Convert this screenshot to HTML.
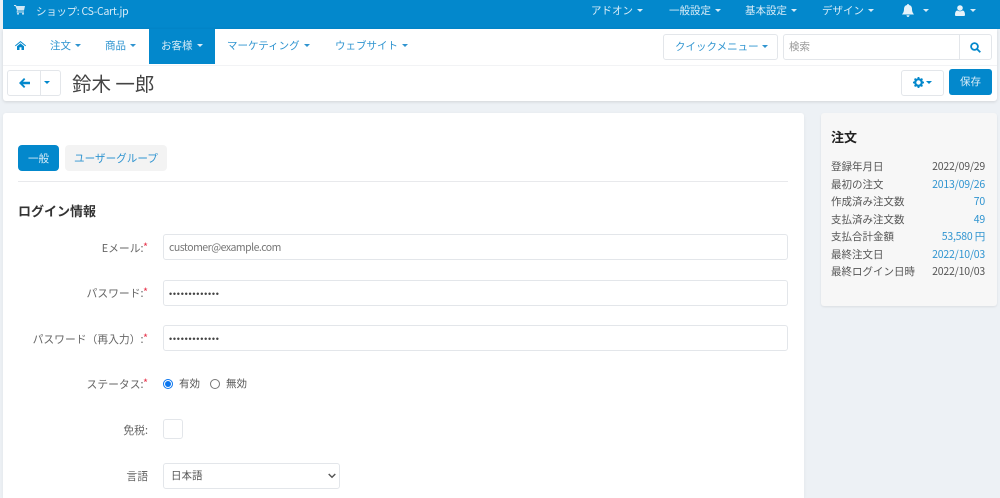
<!DOCTYPE html>
<html lang="ja"><head><meta charset="utf-8"><title>鈴木 一郎</title>
<style>
*{box-sizing:border-box}
html,body{margin:0;padding:0}
body{width:1000px;height:498px;overflow:hidden;position:relative;background:#edf1f5;font-family:"Noto Sans CJK JP","Liberation Sans",sans-serif;font-size:10.5px;color:#555}
.a{position:absolute;white-space:nowrap;line-height:14px}
.box{position:absolute;background:#fff;border:1px solid #e3e6ea;border-radius:3px}
.c{display:inline-block;width:0;height:0;border-left:3.500px solid transparent;border-right:3.500px solid transparent;border-top:3.500px solid currentColor;vertical-align:2px;margin-left:4px}
.w{color:#d9ecf7}
.b{color:#2f94d0}
.l{text-align:right;right:852px;color:#666;font-size:10.800px}
.l i{color:#e8384f;font-style:normal;position:relative;top:-1px}
.s1{left:831px;color:#555}
.s2{right:15px;color:#555;letter-spacing:-.2px}
svg{position:absolute;display:block}
</style></head><body>
<div style="position:absolute;left:3px;top:0;width:997px;height:29px;background:#0388cc"></div>
<div style="position:absolute;left:3px;top:29px;width:994px;height:72px;background:#fff;box-shadow:0 1px 3px rgba(0,0,0,.12);border-radius:0 0 3px 3px"></div>
<div style="position:absolute;left:3px;top:65px;width:994px;height:1px;background:#f2f3f5"></div>

<svg style="left:14px;top:4px" width="12" height="11" viewBox="0 0 12 11" fill="#cfe7f5"><path d="M0 1h2l.4 1H11l-1 4.500H3.400L3.700 7.500H10v1H2.600L3 6 1.400 2H0z"/><circle cx="4" cy="9.700" r="1"/><circle cx="9" cy="9.700" r="1"/></svg>
<div class="a w" style="left:36px;top:5px;letter-spacing:-.3px">ショップ: CS-Cart.jp</div>
<div class="a w" style="left:591px;top:4px">アドオン<span class="c"></span></div>
<div class="a w" style="left:669px;top:4px">一般設定<span class="c"></span></div>
<div class="a w" style="left:745px;top:4px">基本設定<span class="c"></span></div>
<div class="a w" style="left:822px;top:4px">デザイン<span class="c"></span></div>
<svg style="left:902px;top:4px" width="12" height="13" viewBox="0 0 12 13" fill="#e6f3fa"><path d="M6 0c.6 0 1 .4 1 1 2 .4 3 2 3 4 0 3 1 4 2 5.500H0C1 9 2 8 2 5c0-2 1-3.600 3-4 0-.6.400-1 1-1zM4.500 11.300h3C7.400 12.300 6.800 13 6 13s-1.400-.7-1.500-1.700z"/></svg>
<div class="a w" style="left:919px;top:4px"><span class="c"></span></div>
<svg style="left:955px;top:5px" width="10" height="11" viewBox="0 0 10 11" fill="#e6f3fa"><circle cx="5" cy="3" r="2.800"/><path d="M0 10c0-3 1-4.500 2.500-4.500 1.500 1 3.500 1 5 0C9 5.500 10 7 10 10c0 .6-.4 1-1 1H1c-.6 0-1-.4-1-1z"/></svg>
<div class="a w" style="left:966px;top:4px"><span class="c"></span></div>

<svg style="left:15px;top:41px" width="11" height="9" viewBox="0 0 11 9" fill="#0388cc"><path d="M5.500 0L11 4.500l-.6.700L5.500 1.300.6 5.200 0 4.500zM2 5.200l3.500-2.800L9 5.200V9H6.500V6.300h-2V9H2z"/></svg>
<div class="a b" style="left:50px;top:39px">注文<span class="c"></span></div>
<div class="a b" style="left:105px;top:39px">商品<span class="c"></span></div>
<div style="position:absolute;left:149px;top:29px;width:66px;height:35px;background:#0388cc"></div>
<div class="a w" style="left:161px;top:39px">お客様<span class="c"></span></div>
<div class="a b" style="left:227px;top:39px">マーケティング<span class="c"></span></div>
<div class="a b" style="left:335px;top:39px">ウェブサイト<span class="c"></span></div>

<div class="box" style="left:663px;top:34px;width:115px;height:26px"></div>
<div class="a b" style="left:675px;top:40px">クイックメニュー<span class="c" style="margin-left:3px"></span></div>
<div class="box" style="left:783px;top:34px;width:209px;height:26px"></div>
<div style="position:absolute;left:959px;top:35px;width:1px;height:24px;background:#e3e6ea"></div>
<div class="a" style="left:789px;top:40px;color:#999">検索</div>
<svg style="left:970px;top:42px" width="11" height="11" viewBox="0 0 11 11" fill="none" stroke="#0388cc" stroke-width="1.800"><circle cx="4.500" cy="4.500" r="3.400"/><path d="M7 7l3.300 3.300"/></svg>

<div class="box" style="left:7px;top:70px;width:54px;height:26px"></div>
<div style="position:absolute;left:40px;top:71px;width:1px;height:24px;background:#e3e6ea"></div>
<svg style="left:19px;top:78px" width="11" height="10" viewBox="0 0 11 10" fill="#0388cc"><path d="M5 0l1.300 1.300L4 3.700h7v2.600H4l2.300 2.400L5 10 0 5z"/></svg>
<div class="a" style="left:44px;top:76px;color:#0388cc"><span class="c" style="margin:0"></span></div>
<div class="a" style="left:72px;top:73px;font-size:19.500px;line-height:20px;color:#444">鈴木 一郎</div>

<div class="box" style="left:901px;top:70px;width:43px;height:26px"></div>
<svg style="left:913px;top:77px" width="11" height="11" viewBox="0 0 11 11"><circle cx="5.500" cy="5.500" r="3.300" fill="none" stroke="#0388cc" stroke-width="2.200"/><path d="M5.500 0v11M0 5.500h11M1.600 1.600l7.800 7.800M9.400 1.600l-7.800 7.800" stroke="#0388cc" stroke-width="1.800" stroke-dasharray="2 7 2 0"/></svg>
<div class="a" style="left:922px;top:76px;color:#0388cc"><span class="c"></span></div>
<div style="position:absolute;left:949px;top:69px;width:43px;height:26px;background:#0388cc;border-radius:3px"></div>
<div class="a w" style="left:960px;top:75px">保存</div>

<div style="position:absolute;left:3px;top:113px;width:801px;height:385px;background:#fff;border-radius:3px 3px 0 0;box-shadow:0 1px 3px rgba(0,0,0,.06)"></div>
<div style="position:absolute;left:18px;top:145px;width:41px;height:26px;background:#0388cc;border-radius:4px"></div>
<div class="a w" style="left:28px;top:152px">一般</div>
<div style="position:absolute;left:65px;top:145px;width:102px;height:26px;background:#f3f3f3;border-radius:4px"></div>
<div class="a b" style="left:74px;top:152px;font-size:10.600px">ユーザーグループ</div>
<div style="position:absolute;left:18px;top:181px;width:770px;height:1px;background:#e8e9ec"></div>
<div class="a" style="left:18px;top:204px;font-size:13px;font-weight:700;color:#333">ログイン情報</div>

<div class="a l" style="top:241px">Eメール:<i>*</i></div>
<div class="box" style="left:163px;top:234px;width:625px;height:26px"></div>
<div class="a" style="left:169px;top:241px;color:#777;letter-spacing:-.5px">customer@example.com</div>
<div class="a l" style="top:286px">パスワード:<i>*</i></div>
<div class="box" style="left:163px;top:280px;width:625px;height:26px"></div>
<div class="a" style="left:169px;top:287px;color:#444;letter-spacing:.75px;font-family:'Liberation Sans',sans-serif;font-size:9px">•••••••••••••</div>
<div class="a l" style="top:332px">パスワード（再入力）:<i>*</i></div>
<div class="box" style="left:163px;top:325px;width:625px;height:26px"></div>
<div class="a" style="left:169px;top:332px;color:#444;letter-spacing:.75px;font-family:'Liberation Sans',sans-serif;font-size:9px">•••••••••••••</div>
<div class="a l" style="top:377px">ステータス:<i>*</i></div>
<div style="position:absolute;left:163px;top:379px;width:10px;height:10px;border:1px solid #0b76ef;border-radius:50%;background:#fff"><div style="position:absolute;left:1px;top:1px;width:6px;height:6px;border-radius:50%;background:#0b76ef"></div></div>
<div class="a" style="left:179px;top:377px">有効</div>
<div style="position:absolute;left:210px;top:379px;width:10px;height:10px;border:1px solid #777;border-radius:50%;background:#fff"></div>
<div class="a" style="left:226px;top:377px">無効</div>
<div class="a l" style="top:423px">免税:</div>
<div class="box" style="left:163px;top:419px;width:20px;height:20px"></div>
<div class="a l" style="top:469px">言語</div>
<div class="box" style="left:163px;top:463px;width:177px;height:26px"></div>
<div class="a" style="left:171px;top:469px">日本語</div>
<svg style="left:328px;top:473px" width="8" height="6" viewBox="0 0 8 6" fill="none" stroke="#555" stroke-width="1.400"><path d="M.7 1l3.300 3.300L7.300 1"/></svg>

<div style="position:absolute;left:821px;top:113px;width:176px;height:193px;background:#f7f7f7;border-radius:3px;box-shadow:0 1px 2px rgba(0,0,0,.08)"></div>
<div class="a" style="left:831px;top:130px;font-size:13px;font-weight:700;color:#222">注文</div>
<div class="a s1" style="top:160px">登録年月日</div><div class="a s2" style="top:160px">2022/09/29</div>
<div class="a s1" style="top:178px">最初の注文</div><div class="a s2" style="top:178px;color:#2f94d0">2013/09/26</div>
<div class="a s1" style="top:195px">作成済み注文数</div><div class="a s2" style="top:195px;color:#2f94d0">70</div>
<div class="a s1" style="top:213px">支払済み注文数</div><div class="a s2" style="top:213px;color:#2f94d0">49</div>
<div class="a s1" style="top:230px">支払合計金額</div><div class="a s2" style="top:230px;color:#2f94d0">53,580 円</div>
<div class="a s1" style="top:248px">最終注文日</div><div class="a s2" style="top:248px;color:#2f94d0">2022/10/03</div>
<div class="a s1" style="top:265px">最終ログイン日時</div><div class="a s2" style="top:265px">2022/10/03</div>
</body></html>
